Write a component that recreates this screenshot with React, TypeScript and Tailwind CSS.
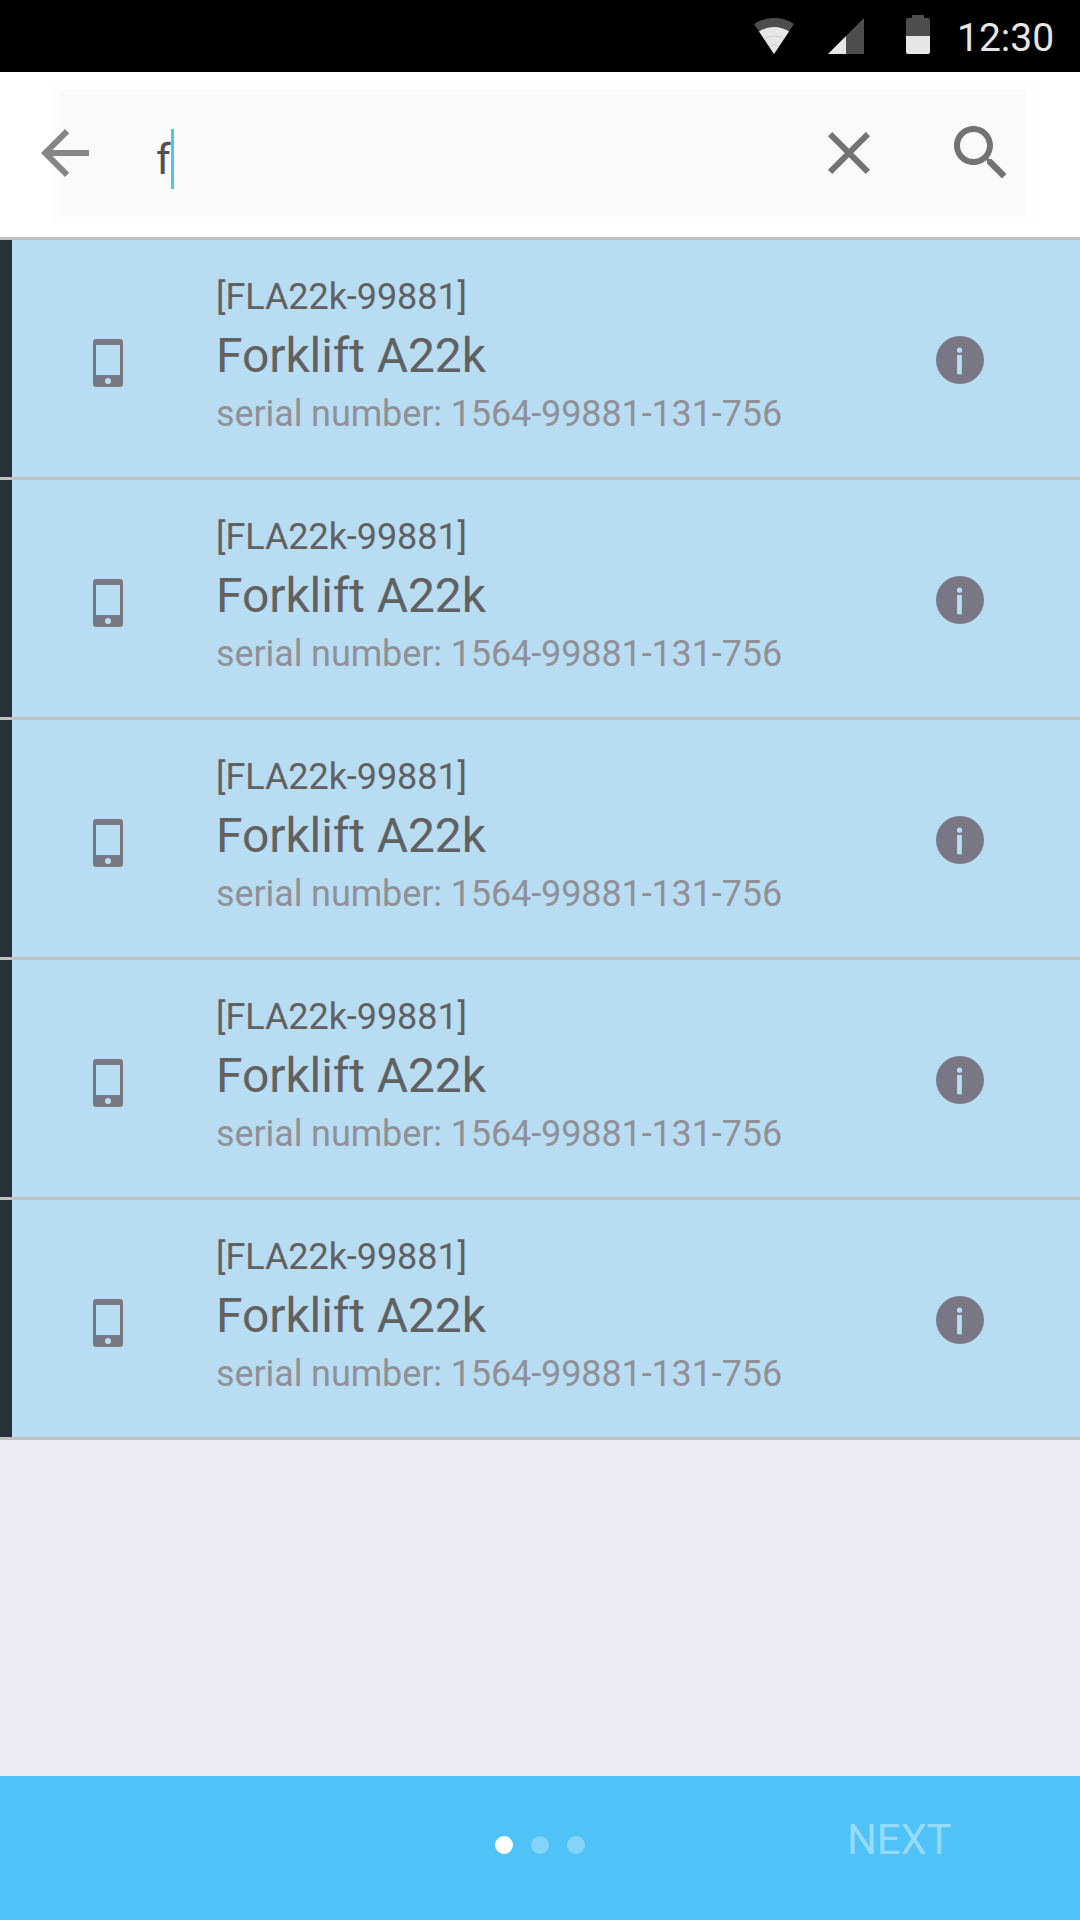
const items = Array.from({ length: 5 }, () => ({
  code: '[FLA22k-99881]',
  name: 'Forklift A22k',
  serial: 'serial number: 1564-99881-131-756',
}));

function StatusBar() {
  return (
    <div className="flex h-[72px] items-start bg-black pl-[754px]">
      <svg className="mt-[18px] h-9 w-10" viewBox="0 0 40 36">
        <path d="M20 36L0 6A36 36 0 0 1 40 6Z" fill="#4d4d4d" />
        <path d="M20 36L5 13.5A27 27 0 0 1 35 13.5Z" fill="#e6e6e6" />
        <path d="M10 21A18 18 0 0 1 30 21M15 28.5A9 9 0 0 1 25 28.5" fill="none" stroke="#bdbdbd" strokeWidth="0.6" />
      </svg>
      <svg className="mt-[18px] ml-[34px] size-9" viewBox="0 0 36 36">
        <path d="M36 0V36H18V18Z" fill="#4d4d4d" />
        <path d="M18 18V36H0Z" fill="#e6e6e6" />
      </svg>
      <svg className="mt-[15px] ml-[42px] h-[39px] w-6" viewBox="0 0 24 39">
        <path d="M6 0H18V3H22Q24 3 24 5V21H0V5Q0 3 2 3H6Z" fill="#4d4d4d" />
        <path d="M0 21H24V37Q24 39 22 39H2Q0 39 0 37Z" fill="#e6e6e6" />
      </svg>
      <span className="mt-[14px] ml-[27px] text-[39px] leading-[48px] text-[#e6e6e6]">12:30</span>
    </div>
  );
}

function SearchHeader() {
  return (
    <header className="flex h-[168px] items-start border-b-[3px] border-[#c1c1c1] bg-white pt-[9px] pl-[51px]">
      <div className="h-[144px] w-[984px] bg-[#fefefe] p-[9px]">
        <div className="flex h-[126px] items-center bg-[#fafafa]">
          <svg className="-ml-[31px] size-[72px]" viewBox="0 0 24 24" fill="#868686">
            <path d="M20 11H7.83l5.59-5.59L12 4l-8 8 8 8 1.41-1.41L7.83 13H20v-2z" />
          </svg>
          <span className="mt-[14px] ml-[55px] w-[15px] text-[42px] leading-[50px] whitespace-nowrap text-[#505050]">f</span>
          <span className="mt-3 h-[60px] w-[3px] bg-[#4fc3f7]" />
          <svg className="ml-[639px] size-[72px]" viewBox="0 0 24 24" fill="#737373">
            <path d="M19 6.41L17.59 5 12 10.59 6.41 5 5 6.41 10.59 12 5 17.59 6.41 19 12 13.41 17.59 19 19 17.59 13.41 12z" />
          </svg>
          <svg className="ml-[60px] size-[72px]" viewBox="0 0 24 24" fill="#737373">
            <path d="M15.5 14h-.79l-.28-.27C15.41 12.59 16 11.11 16 9.5 16 5.91 13.09 3 9.5 3S3 5.91 3 9.5 5.91 16 9.5 16c1.61 0 3.09-.59 4.23-1.57l.27.28v.79l5 4.99L20.49 19l-4.99-5zm-6 0C7.01 14 5 11.99 5 9.5S7.01 5 9.5 5 14 7.01 14 9.5 11.99 14 9.5 14z" />
          </svg>
        </div>
      </div>
    </header>
  );
}

function Row({ code, name, serial }: { code: string; name: string; serial: string }) {
  return (
    <li className="h-60 border-b-[3px] border-[#c1c1c1]">
      <div className="flex h-full items-start border-l-[12px] border-[#263238] bg-[#b8dcf2]">
        <svg className="mt-[99px] ml-[81px] h-12 w-[30px]" viewBox="0 0 30 48" fill="#787885">
          <path fillRule="evenodd" d="M3 0H27Q30 0 30 3V45Q30 48 27 48H3Q0 48 0 45V3Q0 0 3 0ZM3 6V36H27V6ZM15 39A3 3 0 1 0 15 45A3 3 0 1 0 15 39Z" />
        </svg>
        <div className="mt-[30px] ml-[93px] w-[720px] whitespace-nowrap">
          <p className="text-[36px] leading-[54px] tracking-[-0.07px] text-[#616161]">{code}</p>
          <p className="text-[48px] leading-[63px] tracking-[-0.1px] text-[#616161]">{name}</p>
          <p className="text-[36px] leading-[54px] tracking-[-0.11px] text-[#909096]">{serial}</p>
        </div>
        <svg className="mt-24 size-12" viewBox="0 0 48 48">
          <circle cx="24" cy="24" r="24" fill="#787885" />
          <circle cx="23.5" cy="14.2" r="2.6" fill="#b8dcf2" />
          <path d="M21.1 19H25.9V38.3H21.1Z" fill="#b8dcf2" />
        </svg>
      </div>
    </li>
  );
}

export default function App() {
  return (
    <div className="flex h-[1920px] w-[1080px] flex-col overflow-hidden bg-[#ebebf1] font-['Roboto',sans-serif]">
      <StatusBar />
      <SearchHeader />
      <ul>
        {items.map((item, i) => (
          <Row key={i} {...item} />
        ))}
      </ul>
      <footer className="mt-auto flex h-36 items-start bg-[#4fc2f8] pl-[495px]">
        <div className="mt-[60px] flex gap-[18px]">
          <span className="size-[18px] rounded-full bg-white" />
          <span className="size-[18px] rounded-full bg-white/30" />
          <span className="size-[18px] rounded-full bg-white/30" />
        </div>
        <button className="mt-[39px] ml-[262px] text-[42px] leading-[50px] tracking-[-0.2px] text-[#95dbfb]">NEXT</button>
      </footer>
    </div>
  );
}
